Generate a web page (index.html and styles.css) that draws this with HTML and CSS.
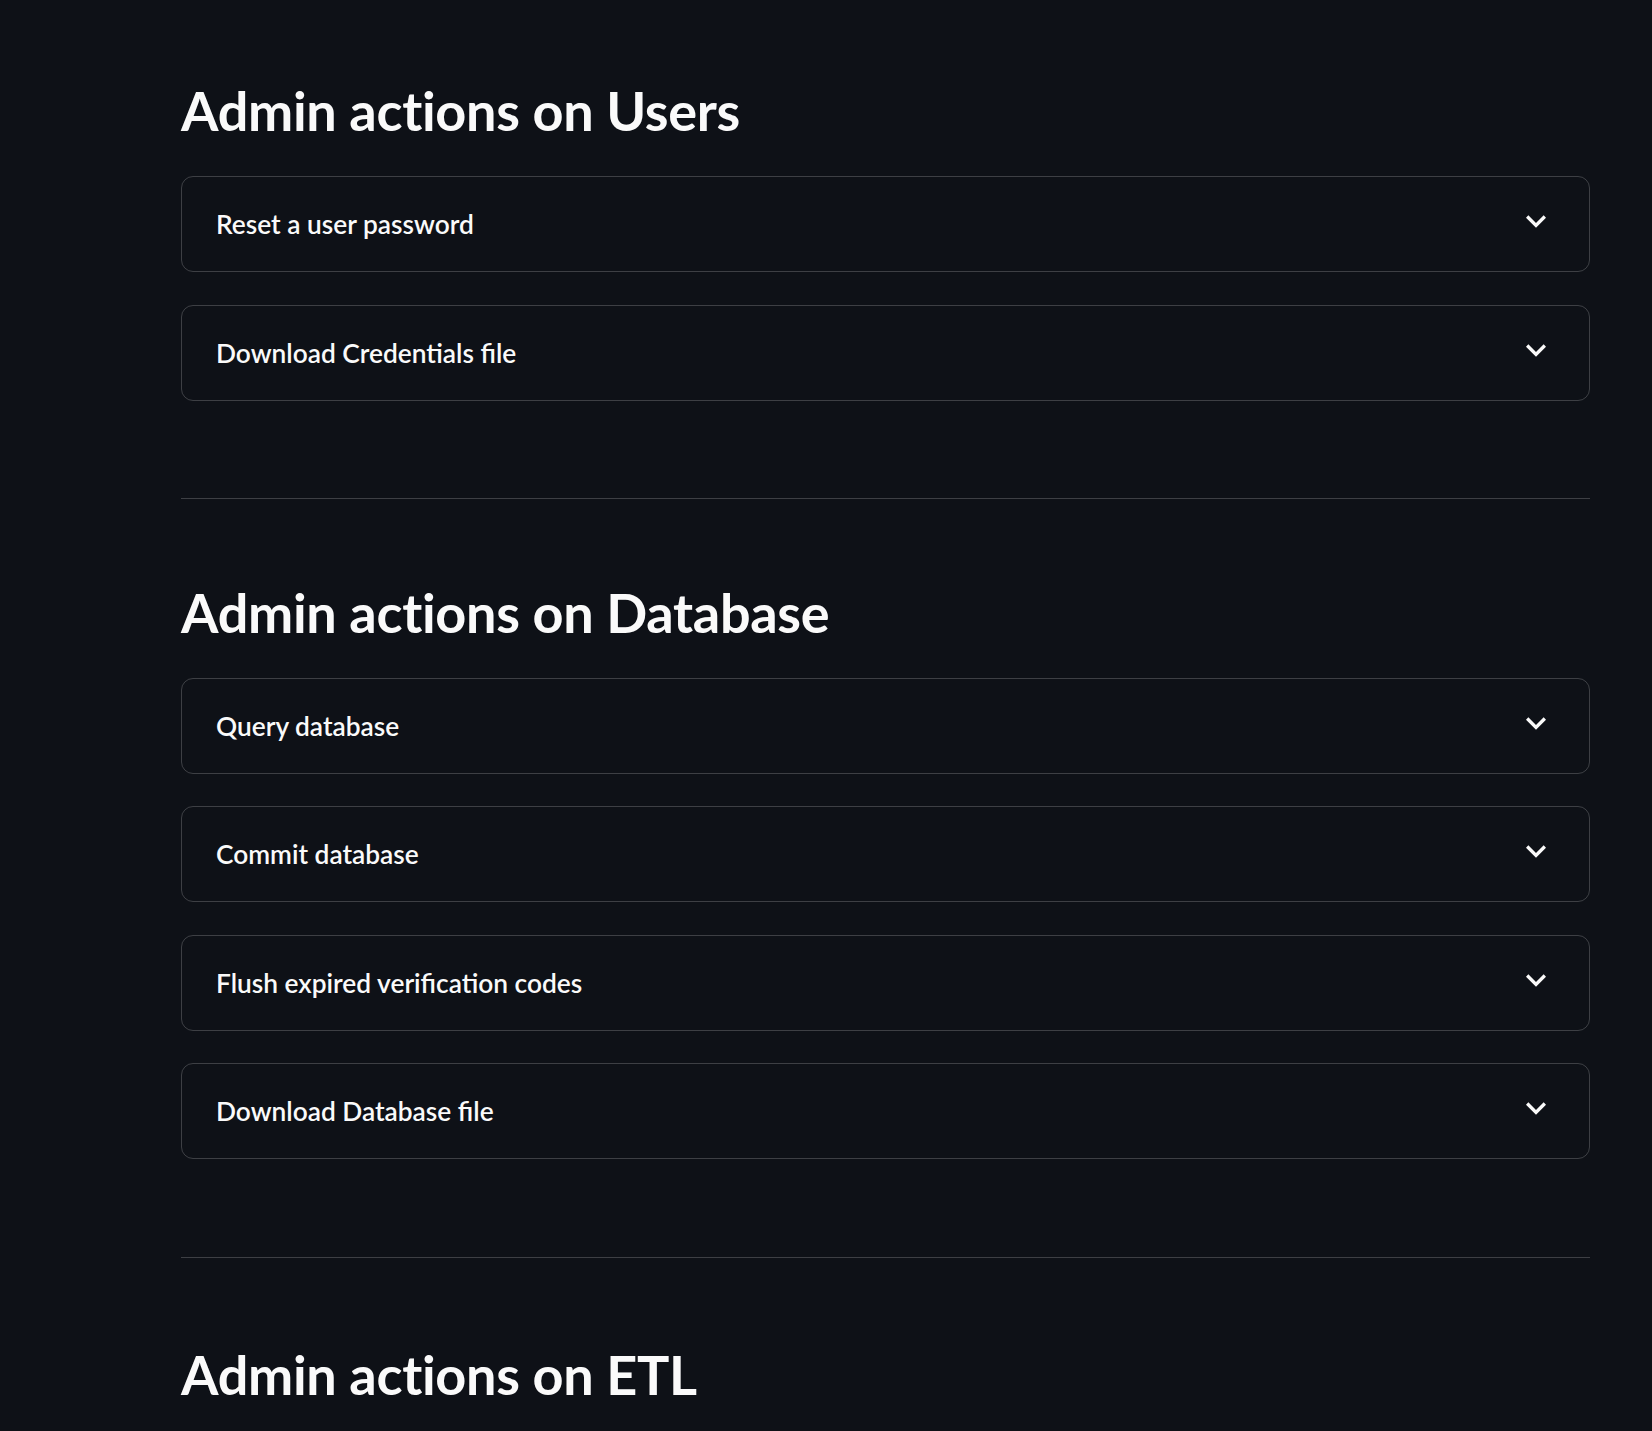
FILE: index.html
```html
<!DOCTYPE html>
<html lang="en">
<head>
<meta charset="utf-8">
<title>Admin</title>
<link rel="stylesheet" href="styles.css">
</head>
<body>
<main class="main">
  <section class="section">
    <h2 class="heading">Admin actions on Users</h2>
    <div class="expanders">
      <details class="expander"><summary class="summary"><span class="label">Reset a user password</span><svg class="chevron" viewBox="0 0 24 24"><path d="M16.59 8.59L12 13.17 7.41 8.59 6 10l6 6 6-6z"/></svg></summary></details>
      <details class="expander"><summary class="summary"><span class="label">Download Credentials file</span><svg class="chevron" viewBox="0 0 24 24"><path d="M16.59 8.59L12 13.17 7.41 8.59 6 10l6 6 6-6z"/></svg></summary></details>
    </div>
  </section>
  <hr class="divider">
  <section class="section">
    <h2 class="heading">Admin actions on Database</h2>
    <div class="expanders">
      <details class="expander"><summary class="summary"><span class="label">Query database</span><svg class="chevron" viewBox="0 0 24 24"><path d="M16.59 8.59L12 13.17 7.41 8.59 6 10l6 6 6-6z"/></svg></summary></details>
      <details class="expander"><summary class="summary"><span class="label">Commit database</span><svg class="chevron" viewBox="0 0 24 24"><path d="M16.59 8.59L12 13.17 7.41 8.59 6 10l6 6 6-6z"/></svg></summary></details>
      <details class="expander"><summary class="summary"><span class="label">Flush expired verification codes</span><svg class="chevron" viewBox="0 0 24 24"><path d="M16.59 8.59L12 13.17 7.41 8.59 6 10l6 6 6-6z"/></svg></summary></details>
      <details class="expander"><summary class="summary"><span class="label">Download Database file</span><svg class="chevron" viewBox="0 0 24 24"><path d="M16.59 8.59L12 13.17 7.41 8.59 6 10l6 6 6-6z"/></svg></summary></details>
    </div>
  </section>
  <hr class="divider divider-last">
  <section class="section">
    <h2 class="heading">Admin actions on ETL</h2>
  </section>
</main>
</body>
</html>
```

FILE: styles.css
```css
html, body {
  margin: 0;
  padding: 0;
  background: #0e1117;
  color: #fafafa;
  font-family: Lato, "Noto Sans", "Liberation Sans", sans-serif;
}

.main {
  width: 1409px;
  margin-left: 181px;
  padding-top: 77px;
  display: flex;
  flex-direction: column;
}

.section {
  display: flex;
  flex-direction: column;
}

.heading {
  margin: 0;
  font-size: 54px;
  font-weight: 700;
  line-height: 67px;
  letter-spacing: -0.3px;
}

.expanders {
  margin-top: 32px;
  display: flex;
  flex-direction: column;
  gap: 32.5px;
}

.expander {
  border: 1px solid rgba(250, 250, 250, 0.2);
  border-radius: 12px;
}

.summary {
  list-style: none;
  height: 94px;
  box-sizing: border-box;
  padding: 0 33px 0 34px;
  display: flex;
  align-items: center;
  justify-content: space-between;
  cursor: pointer;
}

.summary::-webkit-details-marker {
  display: none;
}

.label {
  font-size: 26.3px;
  line-height: 30px;
  font-weight: 600;
}

.chevron {
  width: 40px;
  height: 40px;
  fill: #fafafa;
  margin-bottom: 6px;
}

.divider {
  margin: 97px 0 80px;
  border: none;
  height: 1px;
  background: rgba(250, 250, 250, 0.2);
}

.divider-last {
  margin-top: 98px;
  margin-bottom: 83px;
}
```
